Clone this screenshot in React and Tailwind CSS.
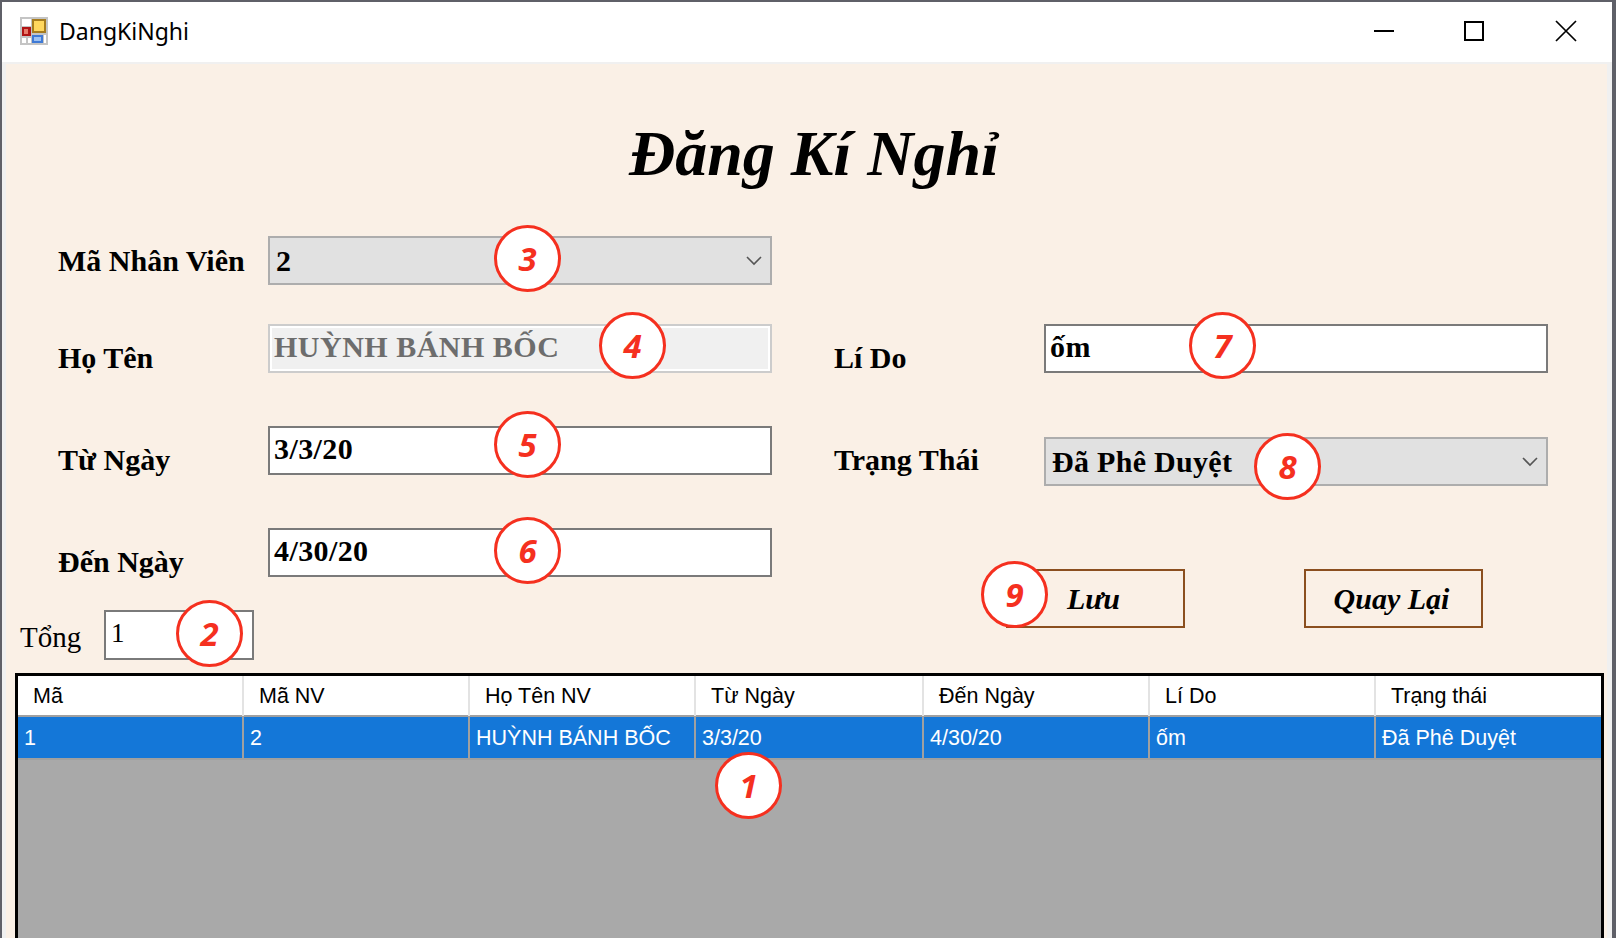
const serif = "font-['Liberation_Serif','Times_New_Roman',serif]";

function Chevron() {
  return (
    <svg width="18" height="12" viewBox="0 0 18 12" fill="none" stroke="#555" strokeWidth="1.6">
      <path d="M2 2 L9 9 L16 2" />
    </svg>
  );
}

function AppIcon() {
  return (
    <svg width="28" height="28" viewBox="0 0 28 28">
      <rect x="0" y="0" width="28" height="28" fill="#c4c4c4" />
      <rect x="2" y="2" width="9" height="7" fill="#fff" />
      <rect x="2" y="10" width="9" height="9" fill="#b01414" />
      <rect x="4" y="12" width="4" height="5" fill="#e87b6b" />
      <rect x="2" y="21" width="4" height="5" fill="#fff" />
      <rect x="8" y="21" width="3" height="5" fill="#fff" />
      <rect x="12" y="2" width="14" height="14" fill="#a67c1e" />
      <rect x="14" y="4" width="10" height="10" fill="#ffd75e" />
      <rect x="12" y="18" width="11" height="8" fill="#3f7ad6" />
      <rect x="14" y="20" width="7" height="4" fill="#9cc1f2" />
      <rect x="24" y="18" width="2" height="8" fill="#fff" />
    </svg>
  );
}

function Label({ children, className = "" }) {
  return (
    <div className={`${serif} font-bold text-[30px] leading-[36px] text-black whitespace-nowrap w-[210px] shrink-0 ${className}`}>
      {children}
    </div>
  );
}

function TextBox({ value }) {
  return (
    <div className={`${serif} font-bold text-[30px] tracking-[0.4px] leading-[40px] text-black w-[504px] h-[49px] bg-white border-2 border-[#7a7a7a] pl-[4px] pt-[1px]`}>
      {value}
    </div>
  );
}

function Combo({ value }) {
  return (
    <div className={`${serif} font-bold text-[30px] tracking-[0.3px] leading-[40px] text-black w-[504px] h-[49px] bg-[#e1e1e1] border-2 border-[#adadad] pl-[6px] pt-[3px] pr-[7px] flex items-start justify-between`}>
      <span>{value}</span>
      <span className="flex items-center h-[40px]"><Chevron /></span>
    </div>
  );
}

function ActionButton({ children }) {
  return (
    <div className={`${serif} font-bold italic text-[30px] leading-none text-black w-[179px] h-[59px] border-2 border-[#8b4f1f] flex items-center justify-center pr-[4px]`}>
      {children}
    </div>
  );
}

function Badge({ n, x, y }) {
  return (
    <div
      className="absolute w-[67px] h-[67px] rounded-full bg-white border-[3px] border-[#f5301f] flex items-center justify-center font-['Open_Sans',sans-serif] font-bold italic text-[33px] leading-none text-[#f5301f]"
      style={{ left: x - 34, top: y - 34 }}
    >
      {n}
    </div>
  );
}

const headers = ["Mã", "Mã NV", "Họ Tên NV", "Từ Ngày", "Đến Ngày", "Lí Do", "Trạng thái"];
const cells = ["1", "2", "HUỲNH BÁNH BỐC", "3/3/20", "4/30/20", "ốm", "Đã Phê Duyệt"];
const gridCols = "grid grid-cols-[226px_226px_226px_228px_226px_226px_225px]";
const sans = "font-['Liberation_Sans',Arial,sans-serif]";

const badges = [
  [3, 528, 259], [4, 633, 346], [5, 528, 445], [6, 528, 551],
  [7, 1223, 346], [8, 1288, 467], [9, 1015, 595], [2, 210, 634], [1, 749, 786],
];

export default function App() {
  return (
    <div className="relative w-[1616px] h-[938px] overflow-hidden bg-[#5f6068] pt-[2px] pl-[2px]">
      <div className="w-[1610px] h-[936px] bg-[#f0f0f0] flex flex-col">
        <div className="h-[60px] bg-white flex items-center pb-[2px] pl-[18px] shrink-0">
          <AppIcon />
          <span className="ml-[11px] font-['Noto_Sans',sans-serif] text-[23px] text-black">DangKiNghi</span>
          <div className="ml-auto flex items-center">
            <svg width="22" height="22" viewBox="0 0 22 22" className="mr-[68px]"><rect x="1" y="10" width="20" height="2" fill="#000" /></svg>
            <svg width="22" height="22" viewBox="0 0 22 22" className="mr-[70px]"><rect x="2" y="2" width="18" height="18" fill="none" stroke="#000" strokeWidth="2" /></svg>
            <svg width="22" height="22" viewBox="0 0 22 22" className="mr-[35px]"><path d="M1 1 L21 21 M21 1 L1 21" stroke="#000" strokeWidth="1.7" /></svg>
          </div>
        </div>
        <div className="h-[2px] bg-[#f0f0f0] shrink-0" />
        <div className="ml-[4px] w-[1601px] flex-1 bg-[#faf0e6] flex flex-col min-h-0">
          <div className={`${serif} font-bold italic text-[64px] leading-none text-black h-[172px] shrink-0 pt-[58px] pl-[623px] whitespace-nowrap`}>
            Đăng Kí Nghỉ
          </div>
          <div className="flex shrink-0">
            <div className="w-[828px] shrink-0 flex flex-col">
              <div className="flex items-center pl-[52px] h-[49px]">
                <Label>Mã Nhân Viên</Label>
                <Combo value="2" />
              </div>
              <div className="flex items-start pl-[52px] mt-[39px] h-[49px]">
                <Label className="pt-[16px]">Họ Tên</Label>
                <div className={`${serif} font-bold text-[30px] tracking-[0.5px] leading-[38px] text-[#6d6d6d] w-[504px] h-[49px] bg-[#f0f0f0] border-2 border-[#cccccc] outline-2 -outline-offset-4 outline-white pl-[4px] pt-[2px]`}>
                  HUỲNH BÁNH BỐC
                </div>
              </div>
              <div className="flex items-start pl-[52px] mt-[53px] h-[49px]">
                <Label className="pt-[16px]">Từ Ngày</Label>
                <TextBox value="3/3/20" />
              </div>
              <div className="flex items-start pl-[52px] mt-[53px] h-[49px]">
                <Label className="pt-[16px]">Đến Ngày</Label>
                <TextBox value="4/30/20" />
              </div>
              <div className="flex items-center pl-[14px] mt-[33px] h-[50px]">
                <div className={`${serif} text-[29px] leading-[36px] text-black w-[84px] pt-[4px]`}>Tổng</div>
                <div className={`${serif} text-[27px] leading-[36px] text-black w-[150px] h-[50px] bg-white border-2 border-[#7a7a7a] pl-[5px] pt-[3px]`}>1</div>
              </div>
            </div>
            <div className="flex-1 flex flex-col pt-[88px]">
              <div className="flex items-start h-[49px]">
                <Label className="pt-[16px]">Lí Do</Label>
                <TextBox value="ốm" />
              </div>
              <div className="flex items-center mt-[64px] h-[49px]">
                <Label className="-translate-y-[2px]">Trạng Thái</Label>
                <Combo value="Đã Phê Duyệt" />
              </div>
              <div className="flex mt-[83px] pl-[172px] gap-[119px]">
                <ActionButton>Lưu</ActionButton>
                <ActionButton>Quay Lại</ActionButton>
              </div>
            </div>
          </div>
          <div className="mt-[13px] ml-[9px] w-[1589px] flex-1 min-h-0 border-[3px] border-b-0 border-black bg-[#a9a9a9] flex flex-col">
            <div className={`${gridCols} h-[41px] bg-white border-b-2 border-[#a0a0a0] ${sans} text-[21.5px] text-black shrink-0`}>
              {headers.map((h, i) => (
                <div key={h} className={`pl-[15px] leading-[40px] whitespace-nowrap ${i < 6 ? "border-r-2 border-[#e3e3e3]" : ""}`}>{h}</div>
              ))}
            </div>
            <div className={`${gridCols} h-[43px] bg-[#1477d8] border-b-2 border-[#a0a0a0] ${sans} text-[21.5px] text-white shrink-0`}>
              {cells.map((c, i) => (
                <div key={i} className={`pl-[6px] leading-[42px] whitespace-nowrap ${i < 6 ? "border-r-2 border-[#a0a0a0]" : ""}`}>{c}</div>
              ))}
            </div>
          </div>
        </div>
      </div>
      {badges.map(([n, x, y]) => (
        <Badge key={n} n={n} x={x} y={y} />
      ))}
    </div>
  );
}
